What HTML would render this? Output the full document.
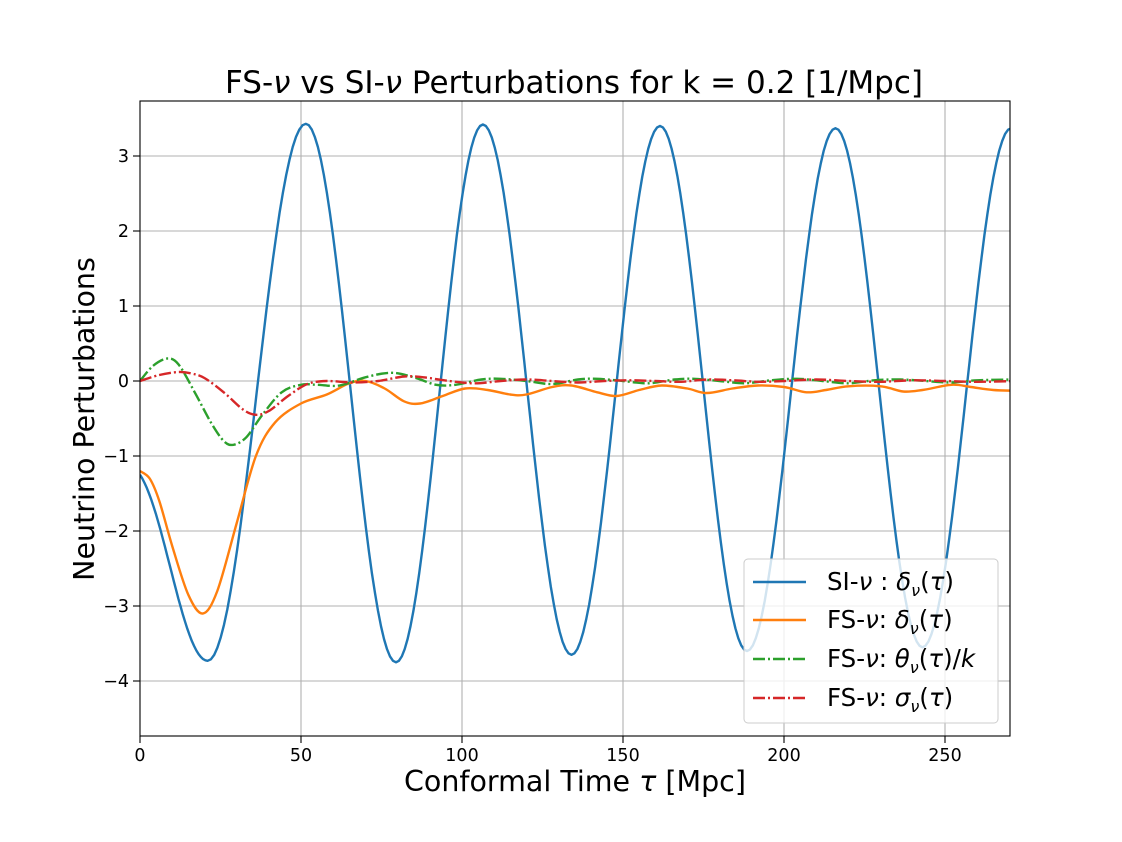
<!DOCTYPE html>
<html><head><meta charset="utf-8"><style>
html,body{margin:0;padding:0;background:#fff;}
svg{display:block;font-family:"DejaVu Sans","Liberation Sans",sans-serif;}
</style></head><body>
<svg id="s" width="1122" height="842" viewBox="0 0 1122 842" xmlns="http://www.w3.org/2000/svg">
<rect width="1122" height="842" fill="#fff"/>
<defs><clipPath id="c"><rect x="140" y="101" width="870" height="635"/></clipPath></defs>
<g id="grid" stroke="#b0b0b0" stroke-width="1.1"></g>
<g id="curves" clip-path="url(#c)" fill="none" stroke-width="2.4" stroke-linejoin="round"></g>
<rect x="140" y="101" width="870" height="635" fill="none" stroke="#000" stroke-width="1.1"/>
<g id="ticks" stroke="#000" stroke-width="1.1"></g>
<g id="labels" font-size="17.5" fill="#000"></g>
<text x="574" y="93" font-size="31" text-anchor="middle">FS-<tspan font-style="italic">ν</tspan> vs SI-<tspan font-style="italic">ν</tspan> Perturbations for k = 0.2 [1/Mpc]</text>
<text x="575" y="791" font-size="28.5" text-anchor="middle">Conformal Time <tspan font-style="italic">τ</tspan> [Mpc]</text>
<text transform="translate(94,419) rotate(-90)" font-size="28.5" text-anchor="middle">Neutrino Perturbations</text>
<g>
<rect x="744" y="559" width="254" height="164" rx="4" fill="#fff" fill-opacity="0.8" stroke="#cccccc" stroke-width="1"/>
<line x1="753" y1="582" x2="806" y2="582" stroke="#1f77b4" stroke-width="2.4"/>
<line x1="753" y1="620" x2="806" y2="620" stroke="#ff7f0e" stroke-width="2.4"/>
<line x1="753" y1="659" x2="806" y2="659" stroke="#2ca02c" stroke-width="2.4" stroke-dasharray="12,3,2,3"/>
<line x1="753" y1="698" x2="806" y2="698" stroke="#d62728" stroke-width="2.4" stroke-dasharray="12,3,2,3"/>
<g font-size="24.5">
<text x="827" y="590">SI-<tspan font-style="italic">ν</tspan> : <tspan font-style="italic">δ</tspan><tspan font-style="italic" font-size="16" dy="6">ν</tspan><tspan dy="-6">(</tspan><tspan font-style="italic">τ</tspan>)</text>
<text x="827" y="628">FS-<tspan font-style="italic">ν</tspan>: <tspan font-style="italic">δ</tspan><tspan font-style="italic" font-size="16" dy="6">ν</tspan><tspan dy="-6">(</tspan><tspan font-style="italic">τ</tspan>)</text>
<text x="827" y="667">FS-<tspan font-style="italic">ν</tspan>: <tspan font-style="italic">θ</tspan><tspan font-style="italic" font-size="16" dy="6">ν</tspan><tspan dy="-6">(</tspan><tspan font-style="italic">τ</tspan>)/<tspan font-style="italic">k</tspan></text>
<text x="827" y="706">FS-<tspan font-style="italic">ν</tspan>: <tspan font-style="italic">σ</tspan><tspan font-style="italic" font-size="16" dy="6">ν</tspan><tspan dy="-6">(</tspan><tspan font-style="italic">τ</tspan>)</text>
</g>
</g>
</svg>
<script>
(function(){
var NS="http://www.w3.org/2000/svg";
function X(t){return 140+t*3.22;}
function Y(v){return 381-v*75;}
function el(p,n,a,txt){var e=document.createElementNS(NS,n);for(var k in a)e.setAttribute(k,a[k]);if(txt!=null)e.textContent=txt;document.getElementById(p).appendChild(e);}
for(var t=50;t<=250;t+=50){el("grid","line",{x1:X(t),y1:101,x2:X(t),y2:736});}
for(var v=-4;v<=3;v++){el("grid","line",{x1:140,y1:Y(v),x2:1010,y2:Y(v)});}
for(var t=0;t<=250;t+=50){el("ticks","line",{x1:X(t),y1:736,x2:X(t),y2:743});el("labels","text",{x:X(t),y:761,"text-anchor":"middle"},String(t));}
for(var v=-4;v<=3;v++){el("ticks","line",{x1:133,y1:Y(v),x2:140,y2:Y(v)});el("labels","text",{x:129,y:Y(v)+6,"text-anchor":"end"},v<0?"\u2212"+(-v):String(v));}
var ex=[[0,-1.25],[21,-3.73],[51.5,3.43],[79.5,-3.75],[106.5,3.42],[134,-3.65],[161.5,3.4],[188.5,-3.6],[216,3.37],[243,-3.55],[270.5,3.37],[298,-3.5]];
var d="";
for(var i=0;i<ex.length-1;i++){var a=ex[i],b=ex[i+1];for(var k=0;k<=30;k++){var f=k/30,t=a[0]+(b[0]-a[0])*f;var u=(1-Math.cos(Math.PI*f))/2;if(i==0)u=Math.sin(Math.PI*f/2)*0.35+u*0.65;var v=a[1]+(b[1]-a[1])*u;d+=(d?"L":"M")+X(t).toFixed(1)+","+Y(v).toFixed(1);}}
el("curves","path",{d:d,stroke:"#1f77b4"});
function cr(pts){var s="M"+X(pts[0][0])+","+Y(pts[0][1]);for(var i=0;i<pts.length-1;i++){var p0=pts[Math.max(0,i-1)],p1=pts[i],p2=pts[i+1],p3=pts[Math.min(pts.length-1,i+2)];var x0=X(p0[0]),y0=Y(p0[1]),x1=X(p1[0]),y1=Y(p1[1]),x2=X(p2[0]),y2=Y(p2[1]),x3=X(p3[0]),y3=Y(p3[1]);s+="C"+(x1+(x2-x0)/6).toFixed(1)+","+(y1+(y2-y0)/6).toFixed(1)+" "+(x2-(x3-x1)/6).toFixed(1)+","+(y2-(y3-y1)/6).toFixed(1)+" "+x2.toFixed(1)+","+y2.toFixed(1);}return s;}
var org=[[0,-1.2],[3,-1.3],[6,-1.6],[10,-2.2],[15,-2.85],[19.5,-3.1],[24,-2.8],[30,-1.9],[36,-1.0],[42,-0.55],[50,-0.3],[58,-0.18],[65,-0.03],[70,0.0],[76,-0.1],[82,-0.27],[87,-0.3],[94,-0.2],[101,-0.1],[108,-0.12],[115,-0.18],[120,-0.18],[128,-0.08],[134,-0.06],[142,-0.15],[148,-0.2],[155,-0.12],[162,-0.06],[170,-0.1],[176,-0.16],[184,-0.1],[192,-0.06],[200,-0.08],[207,-0.15],[213,-0.12],[220,-0.07],[230,-0.07],[237,-0.14],[243,-0.12],[252,-0.05],[258,-0.08],[265,-0.12],[272,-0.13]];
var grn=[[0,0],[4,0.2],[8.5,0.3],[12,0.22],[17,-0.15],[22,-0.55],[26,-0.8],[29,-0.85],[33,-0.75],[38,-0.45],[44,-0.15],[50,-0.05],[55,-0.05],[62,-0.06],[70,0.05],[78,0.11],[85,0.05],[92,-0.05],[98,-0.05],[106,0.02],[112,0.03],[120,0.0],[128,-0.04],[136,0.02],[142,0.03],[150,0.0],[158,-0.03],[166,0.02],[172,0.03],[180,0.0],[188,-0.03],[196,0.01],[204,0.03],[212,0.0],[220,-0.03],[228,0.01],[236,0.02],[244,0.0],[252,-0.02],[260,0.01],[272,0.02]];
var red=[[0,0],[6,0.08],[12,0.12],[16,0.1],[20,0.04],[26,-0.15],[32,-0.38],[36,-0.45],[40,-0.4],[46,-0.2],[52,-0.04],[58,0.0],[66,-0.02],[74,0.0],[82,0.06],[88,0.05],[96,0.0],[104,-0.03],[112,0.0],[120,0.02],[128,0.0],[136,-0.02],[144,0.0],[152,0.01],[160,0.0],[168,-0.01],[176,0.02],[184,0.01],[192,-0.01],[200,0.0],[210,0.02],[220,0.0],[230,-0.01],[240,0.01],[250,0.0],[260,-0.01],[272,0.0]];
el("curves","path",{d:cr(org),stroke:"#ff7f0e"});
el("curves","path",{d:cr(grn),stroke:"#2ca02c","stroke-dasharray":"12,3,2,3"});
el("curves","path",{d:cr(red),stroke:"#d62728","stroke-dasharray":"12,3,2,3"});
})();
</script>
</body></html>
